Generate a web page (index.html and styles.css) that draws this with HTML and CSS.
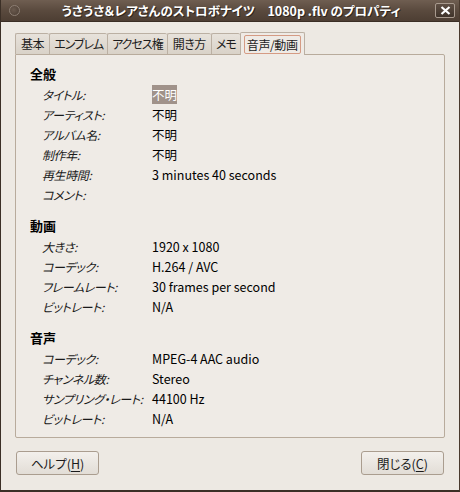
FILE: index.html
```html
<!DOCTYPE html>
<html lang="ja">
<head>
  <meta charset="UTF-8" />
  <title>うさうさ＆レアさんのストロボナイツ 1080p .flv のプロパティ</title>
  <link rel="stylesheet" href="styles.css">
</head>
<body>
  <div class="window">
    <div class="titlebar">
      <span class="menu-dot"></span>
      <span class="title">うさうさ＆レアさんのストロボナイツ　1080p .flv のプロパティ</span>
      <span class="close-btn">
        <svg width="11" height="9" viewBox="0 0 11 9"><path d="M1.5 1 L9.5 8 M9.5 1 L1.5 8" stroke="#fff" stroke-width="2.2"/></svg>
      </span>
    </div>

    <div class="client">
      <div class="notebook">
        <div class="tabs">
          <div class="tab">基本</div>
          <div class="tab kana">エンブレム</div>
          <div class="tab kana">アクセス権</div>
          <div class="tab">開き方</div>
          <div class="tab kana">メモ</div>
          <div class="tab active"><span class="focus">音声/動画</span></div>
        </div>

        <div class="panel">
          <div class="section">
            <div class="heading">全般</div>
            <div class="row"><span class="key">タイトル:</span><span class="val"><span class="selected">不明</span></span></div>
            <div class="row"><span class="key">アーティスト:</span><span class="val">不明</span></div>
            <div class="row"><span class="key">アルバム名:</span><span class="val">不明</span></div>
            <div class="row"><span class="key">制作年:</span><span class="val">不明</span></div>
            <div class="row"><span class="key">再生時間:</span><span class="val">3 minutes 40 seconds</span></div>
            <div class="row"><span class="key">コメント:</span><span class="val"></span></div>
          </div>

          <div class="section">
            <div class="heading">動画</div>
            <div class="row"><span class="key">大きさ:</span><span class="val">1920 x 1080</span></div>
            <div class="row"><span class="key">コーデック:</span><span class="val">H.264 / AVC</span></div>
            <div class="row"><span class="key">フレームレート:</span><span class="val">30 frames per second</span></div>
            <div class="row"><span class="key">ビットレート:</span><span class="val">N/A</span></div>
          </div>

          <div class="section">
            <div class="heading">音声</div>
            <div class="row"><span class="key">コーデック:</span><span class="val">MPEG-4 AAC audio</span></div>
            <div class="row"><span class="key">チャンネル数:</span><span class="val">Stereo</span></div>
            <div class="row"><span class="key">サンプリング・レート:</span><span class="val">44100 Hz</span></div>
            <div class="row"><span class="key">ビットレート:</span><span class="val">N/A</span></div>
          </div>
        </div>
      </div>

      <div class="buttons">
        <button class="btn">ヘルプ(<u>H</u>)</button>
        <button class="btn">閉じる(<u>C</u>)</button>
      </div>
    </div>
  </div>
</body>
</html>
```

FILE: styles.css
```css
* {
  box-sizing: border-box;
  margin: 0;
  padding: 0;
}

body {
  width: 460px;
  height: 492px;
  background: #ede9e3;
  font-family: "Noto Sans CJK JP", sans-serif;
  font-feature-settings: "palt";
  font-size: 12.5px;
  color: #000;
  overflow: hidden;
}

.window {
  width: 460px;
  height: 492px;
  display: flex;
  flex-direction: column;
  border: 1px solid #3b2f26;
  border-top: none;
  border-right-color: #4a3a2e;
  border-bottom: 2px solid #3b2f26;
  background: #ede9e3;
}

/* Title bar */
.titlebar {
  height: 22px;
  display: flex;
  align-items: center;
  position: relative;
  background: linear-gradient(#6f5e51, #5a4a3e 50%, #4d3e33);
  border-bottom: 1px solid #3a2e25;
}

.menu-dot {
  position: absolute;
  left: 8px;
  top: 5px;
  width: 11px;
  height: 11px;
  border-radius: 50%;
  border: 1px solid #8c7e73;
  background: radial-gradient(circle at 40% 40%, #6b5b4f, #4a3c32);
}

.title {
  flex: 1;
  text-align: center;
  color: #fff;
  font-weight: bold;
  font-size: 12.5px;
  white-space: pre;
  text-shadow: 1px 1px 0 #2e241c;
  padding-left: 2px;
}

.close-btn {
  position: absolute;
  right: 4px;
  top: 3px;
  width: 20px;
  height: 15px;
  border: 1px solid #a89a8e;
  border-radius: 2px;
  background: linear-gradient(#5f4f44, #3f332a);
  display: flex;
  align-items: center;
  justify-content: center;
}

/* Client area */
.client {
  flex: 1;
  padding: 10px 13px 0 14px;
  display: flex;
  flex-direction: column;
}

.tabs {
  display: flex;
  align-items: flex-end;
  height: 22px;
}

.tab {
  height: 21px;
  padding: 0 5px;
  font-size: 12px;
  line-height: 20px;
  letter-spacing: -0.4px;
  color: #1c1c1c;
  background: linear-gradient(#e7e2db, #d9d2c8);
  border: 1px solid #bbb0a3;
  border-bottom: none;
  border-right: none;
  border-radius: 2px 2px 0 0;
}

.tab.kana {
  padding: 0 4px;
  letter-spacing: -1px;
}

.tab.active {
  height: 23px;
  margin-bottom: -1px;
  padding: 2px 3px 0;
  background: #efebe6;
  border-right: 1px solid #bbb0a3;
  position: relative;
  z-index: 1;
}

.focus {
  display: inline-block;
  line-height: 17px;
  padding: 0 2px;
  border: 1px solid #d59b84;
  border-radius: 2px;
}

.panel {
  height: 384px;
  width: 430px;
  background: #efebe6;
  border: 1px solid #b8ab9c;
  border-radius: 0 2px 2px 2px;
  padding: 9px 13px 0 14px;
  display: flex;
  flex-direction: column;
  gap: 12px;
}

.heading {
  height: 20px;
  line-height: 20px;
  font-weight: bold;
  font-size: 13px;
}

.row {
  height: 20px;
  display: grid;
  grid-template-columns: 110px 1fr;
  align-items: center;
  padding-left: 12px;
}

.key {
  font-style: italic;
  font-size: 12px;
  letter-spacing: -0.4px;
  color: #1a1a1a;
  white-space: nowrap;
}

.val {
  white-space: nowrap;
}

.selected {
  background: #a0928a;
  color: #fff;
}

/* Buttons */
.buttons {
  display: flex;
  justify-content: space-between;
  margin-top: 13px;
  padding-right: 2px;
  padding-left: 1px;
}

.btn {
  width: 83px;
  height: 24px;
  font-family: "Noto Sans CJK JP", sans-serif;
  font-feature-settings: "palt";
  font-size: 12.5px;
  color: #1a1a1a;
  background: linear-gradient(#f3f0ec, #e2ddd6);
  border: 1px solid #aa9d8f;
  border-radius: 3px;
}

.btn u {
  text-underline-offset: 2px;
}
```
